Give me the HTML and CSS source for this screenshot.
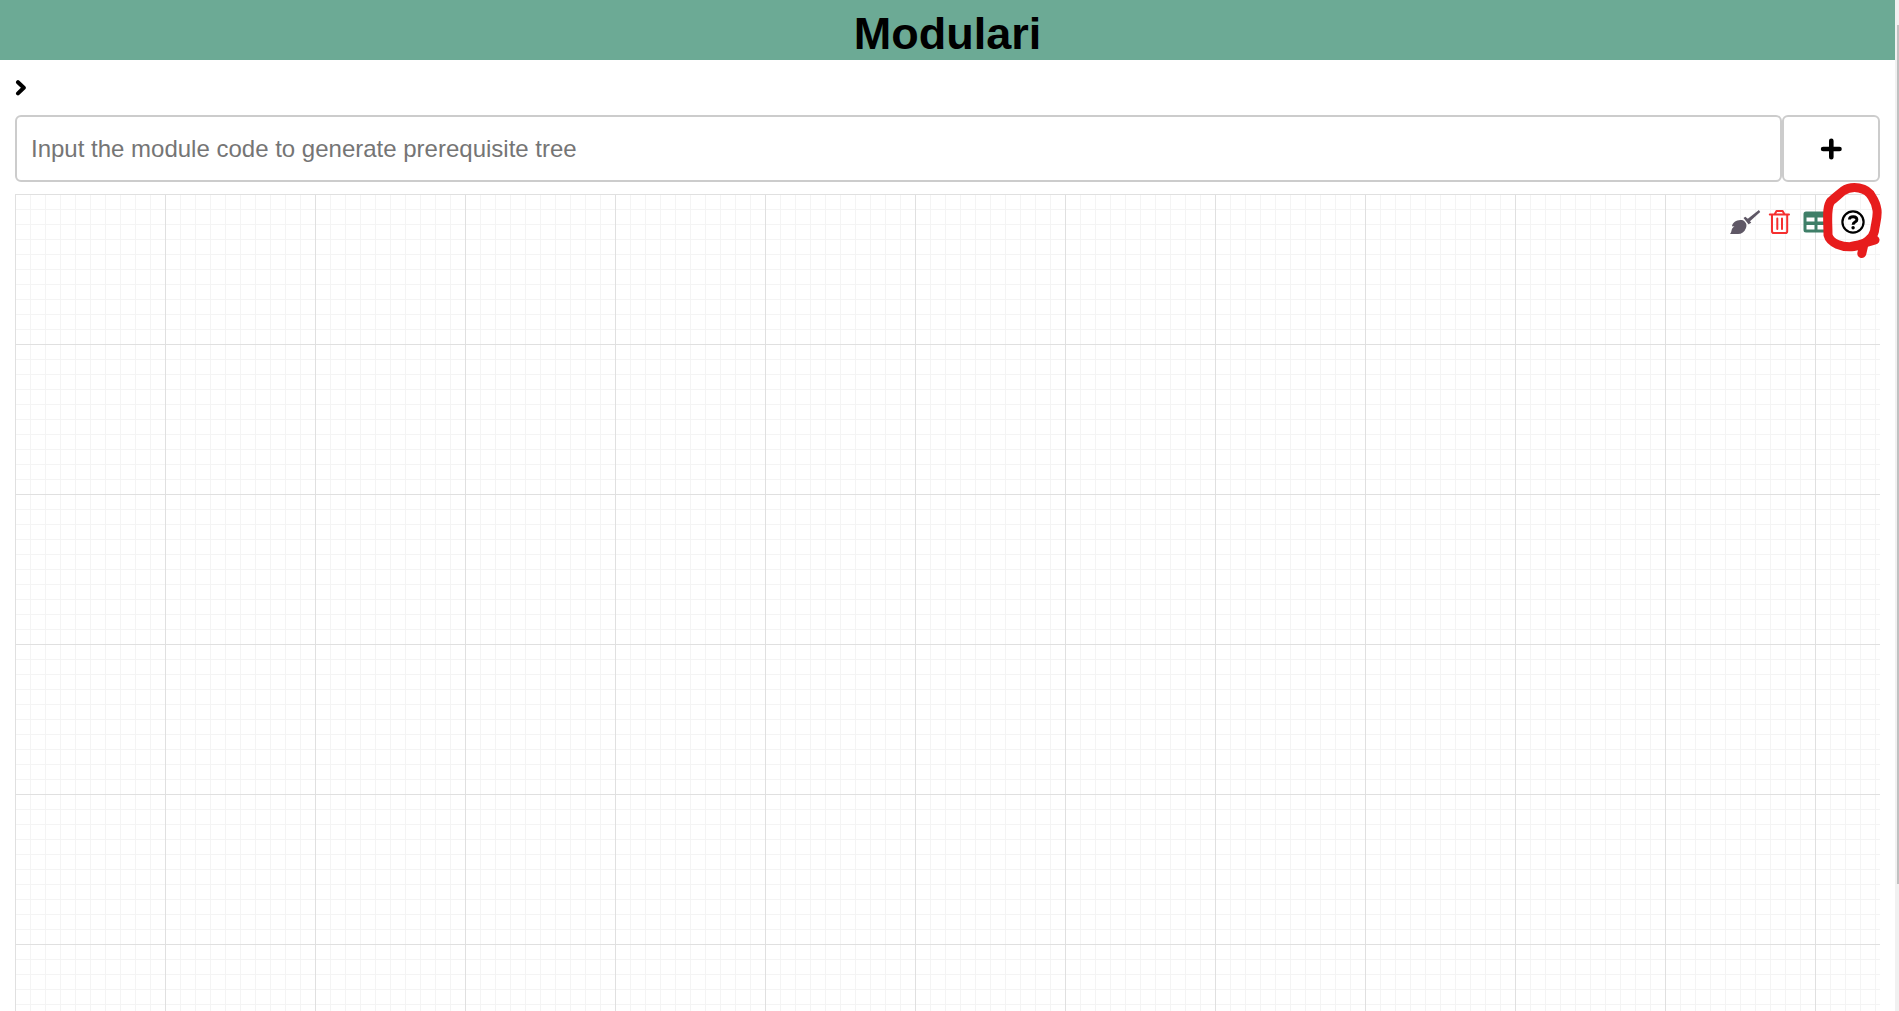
FILE: index.html
```
<!DOCTYPE html>
<html lang="en">
<head>
<meta charset="utf-8">
<title>Modulari</title>
<link rel="stylesheet" href="styles.css">
</head>
<body>
<div class="page">
  <header class="header"><h1 class="title">Modulari</h1></header>
  <main class="content">
    <div class="toggle">
      <svg class="chevron" width="12" height="17" viewBox="0 0 12 17"><path d="M3 3.200 8.800 8.800 3 14.400"/></svg>
    </div>
    <form class="search">
      <input class="code-input" type="text" placeholder="Input the module code to generate prerequisite tree">
      <button class="add" type="button" aria-label="Add">
        <svg width="22" height="22" viewBox="0 0 22 22"><path class="plus" d="M11.300 2.800V19.200M3.100 11H19.500"/></svg>
      </button>
    </form>
    <section class="canvas">
      <svg class="tools" width="165" height="80" viewBox="1725 180 165 80">
        <g class="broom">
          <path d="M1730 234C1732.500 231.500 1730.500 228.500 1734.500 226.500L1732 226.200C1732.500 222 1738 218.800 1743 220.300C1746 222 1747.300 225 1746 228C1744.500 232 1741.500 234 1738 234Z"/>
          <path d="M1743.500 218 1745.300 216.700 1747.800 218.800 1758.900 210 1760.200 211.900 1750 221.300 1751.300 222.800 1748.500 224.300Z"/>
        </g>
        <g class="trash">
          <path d="M1769.800 214.500H1789M1772 215V231.200Q1772 233 1773.800 233H1785.500Q1787.200 233 1787.200 231.200V215M1774.500 214.500 1776.500 211H1782.600L1784.600 214.500M1777.300 218.500V229M1782 218.500V229"/>
        </g>
        <path class="table" fill-rule="evenodd" d="M1806 211.500H1826Q1828.500 211.500 1828.500 214V230Q1828.500 232.500 1826 232.500H1806Q1803.500 232.500 1803.500 230V214Q1803.500 211.500 1806 211.500ZM1806.500 217.500V221.500H1814.500V217.500ZM1817.500 217.500V221.500H1825.500V217.500ZM1806.500 225V229.500H1814.500V225ZM1817.500 225V229.500H1825.500V225Z"/>
        <g class="help">
          <circle cx="1853" cy="222" r="10.600"/>
          <path d="M1849.400 219.500C1849.700 215.800 1856.900 215.800 1856.900 219.700C1856.900 222.200 1853.100 222 1853.100 224.700"/>
          <circle class="dot" cx="1853.100" cy="227.700" r="1.700"/>
        </g>
        <path class="marker" d="M1872 197C1867 187 1852 185 1843 191C1839 194 1835 198 1831 201C1826 207 1828 220 1828 235C1830 243 1842 248 1854 246.500C1865 245 1873 238 1874.500 231C1875 225 1878 217 1877 210Q1876 203 1872 197M1851 246.500C1860 245 1868 242 1875 240M1864 244 1861.800 253.500"/>
      </svg>
    </section>
  </main>
  <div class="scrollbar"><div class="thumb"></div></div>
</div>
</body>
</html>
```
FILE: styles.css
```
* { box-sizing: border-box; }
body { margin: 0; background: #fff; font-family: Arial, "Liberation Sans", sans-serif; overflow: hidden; }
.page { height: 1011px; display: grid; grid-template: 60px 1fr / 1fr 4px; overflow: hidden; }
.header { background: #6caa95; text-align: center; }
.title { margin: 0; font-size: 45px; line-height: 68px; color: #000; }
.content { padding: 0 15px; display: flex; flex-direction: column; min-height: 0; }
.toggle { height: 55px; padding-top: 19px; flex: none; }
.chevron { display: block; fill: none; stroke: #000; stroke-width: 4; stroke-linecap: round; stroke-linejoin: round; }
.search { display: grid; grid-template-columns: 1fr 98px; height: 67px; flex: none; }
.code-input, .add { border: 2px solid #ccc; border-radius: 6px; background: #fff; }
.code-input { width: 100%; padding: 0 14px; font: 24px Arial, "Liberation Sans", sans-serif; color: #000; }
.code-input::placeholder { color: #757575; }
.add { padding: 0; display: grid; place-items: center; }
.add svg { display: block; }
.plus { stroke: #000; stroke-width: 4.6; stroke-linecap: round; fill: none; }
.canvas {
  flex: 1;
  min-height: 0;
  margin-top: 12px;
  display: flex;
  justify-content: flex-end;
  background:
    linear-gradient(#e0e0e0 1px, transparent 1px) 0 0 / 150px 150px,
    linear-gradient(90deg, #e0e0e0 1px, transparent 1px) 0 0 / 150px 150px,
    linear-gradient(#f4f4f4 1px, transparent 1px) 0 0 / 15px 15px,
    linear-gradient(90deg, #f4f4f4 1px, transparent 1px) 0 0 / 15px 15px;
}
.tools { margin: -14px -10px 0 0; flex: none; }
.broom { fill: #5f5866; }
.trash { fill: none; stroke: #f52f2f; stroke-width: 2; stroke-linejoin: round; stroke-linecap: round; }
.table { fill: #3f7f68; }
.help { fill: none; stroke: #000; stroke-width: 2.2; }
.help path { stroke-width: 2.9; }
.help .dot { fill: #000; stroke: none; }
.marker { fill: none; stroke: #e71c1c; stroke-width: 9; stroke-linecap: round; stroke-linejoin: round; }
.scrollbar { grid-column: 2; grid-row: 1 / 3; background: #f1f1f1; padding: 25px 0 0 2px; }
.thumb { height: 859px; background: #c1c1c1; }
```
